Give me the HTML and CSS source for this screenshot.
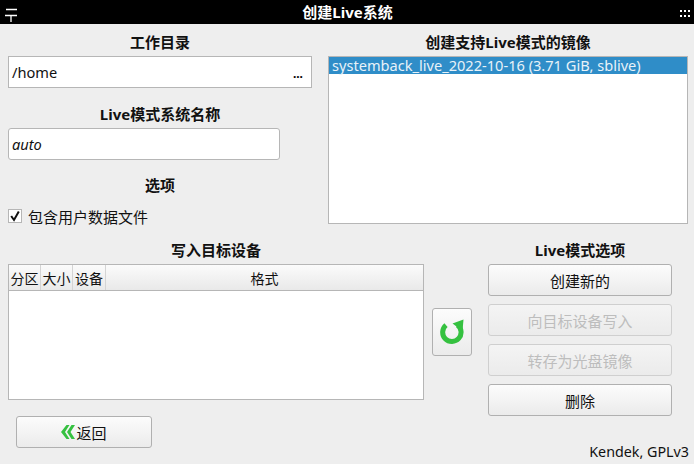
FILE: index.html
```html
<!DOCTYPE html>
<html lang="zh">
<head>
<meta charset="utf-8">
<title>创建Live系统</title>
<link rel="stylesheet" href="styles.css">
</head>
<body>
<header class="titlebar">
  <svg class="tb-icon" width="14" height="24" viewBox="0 0 14 24"><path d="M2 9.5H13M1 15.5H13M7 15.5V22" stroke="#fff" stroke-width="1.3" fill="none"/></svg>
  <span class="tb-title">创建Live系统</span>
  <svg class="tb-icon" width="10" height="24" viewBox="0 0 10 24"><g fill="#fff"><rect x="0" y="10" width="2" height="2"/><rect x="4" y="10" width="2" height="2"/><rect x="8" y="10" width="2" height="2"/><rect x="0" y="15" width="2" height="2"/><rect x="4" y="15" width="2" height="2"/><rect x="8" y="15" width="2" height="2"/></g></svg>
</header>
<main class="content">
  <section class="top">
    <div class="col-left">
      <h2 class="heading">工作目录</h2>
      <div class="field field-path"><span>/home</span><span class="dots">...</span></div>
      <h2 class="heading heading-gap">Live模式系统名称</h2>
      <div class="field field-name"><em>auto</em></div>
      <h2 class="heading heading-gap heading-options">选项</h2>
      <label class="check">
        <span class="box"><svg width="12" height="12" viewBox="0 0 12 12"><path d="M2.2 6L5 10L9.8 1.5" stroke="#111" stroke-width="2" fill="none"/></svg></span>
        <span>包含用户数据文件</span>
      </label>
    </div>
    <div class="col-right">
      <h2 class="heading">创建支持Live模式的镜像</h2>
      <div class="list"><div class="list-item">systemback_live_2022-10-16 (3.71 GiB, sblive)</div></div>
    </div>
  </section>
  <section class="bottom">
    <div class="col-table">
      <h2 class="heading">写入目标设备</h2>
      <div class="table">
        <div class="thead">
          <span class="th th-a">分区</span><span class="th th-b">大小</span><span class="th th-c">设备</span><span class="th th-d">格式</span>
        </div>
      </div>
      <button class="btn btn-back">
        <svg width="14" height="14" viewBox="0 0 14 14"><path d="M5.5 0L0 7L5.5 14H8.5L4 7L8.5 0ZM10.5 0L6 7L10.5 14H14L9.5 7L14 0Z" fill="#35c140"/></svg><span>返回</span>
      </button>
    </div>
    <div class="col-refresh">
      <button class="btn btn-refresh">
        <svg width="24" height="26" viewBox="0 0 24 26"><path d="M6 6.2A9.2 9.2 0 1 0 17.5 6" stroke="#35c140" stroke-width="5" fill="none"/><path d="M12.5 4.5L23.5 0.5L22.5 12Z" fill="#35c140"/></svg>
      </button>
    </div>
    <div class="col-actions">
      <h2 class="heading">Live模式选项</h2>
      <div class="actions">
        <button class="btn btn-action">创建新的</button>
        <button class="btn btn-action" disabled>向目标设备写入</button>
        <button class="btn btn-action" disabled>转存为光盘镜像</button>
        <button class="btn btn-action">删除</button>
      </div>
    </div>
  </section>
  <footer class="credit">Kendek, GPLv3</footer>
</main>
</body>
</html>
```
FILE: styles.css
```css
* { box-sizing: border-box; }
html, body { margin: 0; padding: 0; }
body {
  width: 694px;
  height: 464px;
  overflow: hidden;
  background: #eeeeee;
  color: #111;
  font-family: "Noto Sans", "Noto Sans CJK SC", sans-serif;
  font-size: 14px;
  display: flex;
  flex-direction: column;
}
.titlebar {
  height: 24px;
  flex: none;
  background: #000;
  color: #fff;
  display: flex;
  align-items: center;
  padding: 0 4px;
}
.tb-icon { flex: none; }
.tb-title {
  flex: 1;
  text-align: center;
  font-weight: 700;
  font-size: 15px;
  line-height: 24px;
  padding-right: 3px;
}
.content { flex: 1; padding: 0 6px 0 8px; display: flex; flex-direction: column; }
.heading {
  margin: 0;
  height: 32px;
  line-height: 36px;
  font-size: 15px;
  font-weight: 700;
  text-align: center;
}
.heading-gap { height: 40px; line-height: 52px; }
.heading-options { line-height: 50px; }
.top { display: flex; gap: 16px; height: 208px; }
.col-left { width: 304px; }
.col-right { width: 360px; }
.field {
  height: 32px;
  background: #fff;
  border: 1px solid #b6b6b6;
  display: flex;
  align-items: center;
  justify-content: space-between;
  padding: 0 3px;
  font-size: 14.6px;
}
.field-path { width: 304px; }
.field-name { width: 272px; border-radius: 3px; }
.field-name em { font-style: italic; }
.dots { font-size: 12px; font-weight: 700; padding: 4px 5px 0 0; line-height: 1; color: #000; }
.check { display: flex; align-items: center; gap: 6px; height: 18px; margin-top: 7px; font-size: 15px; }
.box {
  width: 14px;
  height: 14px;
  background: #fff;
  border: 1px solid #b6b6b6;
  display: flex;
  align-items: center;
  justify-content: center;
}
.list { height: 168px; background: #fff; border: 1px solid #b6b6b6; }
.list-item {
  height: 17px;
  line-height: 16px;
  background: #2f8dc8;
  color: #e8f2f8;
  padding-left: 3px;
  font-size: 14.6px;
  white-space: nowrap;
}
.bottom { display: flex; height: 216px; }
.col-table { width: 416px; }
.table { height: 136px; background: #fff; border: 1px solid #b6b6b6; }
.thead {
  display: flex;
  height: 26px;
  border-bottom: 1px solid #b6b6b6;
  background: linear-gradient(#fbfbfb, #e9e9e9);
}
.th { text-align: center; line-height: 28px; border-right: 1px solid #d4d4d4; white-space: nowrap; font-size: 14px; }
.th-a { width: 32px; }
.th-b { width: 32px; }
.th-c { width: 33px; }
.th-d { flex: 1; border-right: 0; }
.btn {
  font: inherit;
  color: #111;
  background: linear-gradient(#fcfcfc, #ebebeb);
  border: 1px solid #b0b0b0;
  border-radius: 3px;
  padding: 0;
  display: flex;
  align-items: center;
  justify-content: center;
}
.btn:disabled { color: #bdbdbd; border-color: #cfcfcf; background: linear-gradient(#f4f4f4, #ebebeb); }
.btn-back { width: 136px; height: 32px; margin: 16px 0 0 8px; gap: 1px; font-size: 15px; }
.col-refresh { width: 40px; margin-left: 8px; padding-top: 76px; }
.btn-refresh { width: 40px; height: 48px; }
.col-actions { width: 184px; margin-left: 16px; }
.actions { display: flex; flex-direction: column; gap: 8px; }
.btn-action { width: 184px; height: 32px; font-size: 15px; }
.credit { text-align: right; font-size: 14.3px; line-height: 18px; margin: -5px -1px 0 0; }
```
